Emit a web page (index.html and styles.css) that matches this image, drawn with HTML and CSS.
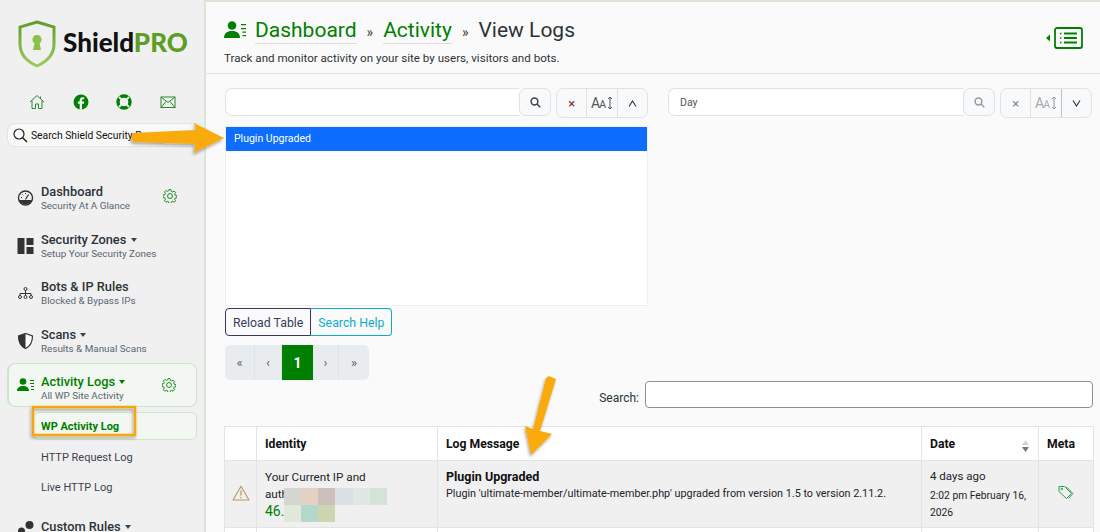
FILE: index.html
```html
<!DOCTYPE html>
<html lang="en">
<head>
<meta charset="utf-8">
<title>ShieldPRO - View Logs</title>
<link rel="stylesheet" href="styles.css">
</head>
<body>
<div class="app">
  <aside class="side">
    <div class="logo">
      <svg class="logo-mark" width="40" height="48" viewBox="0 0 38 48"><defs><linearGradient id="g" x1="0" y1="0" x2="0" y2="1"><stop offset="0" stop-color="#5f9e2e"/><stop offset="1" stop-color="#9ccb5a"/></linearGradient></defs><path d="M19 2 L36 7 V24 C36 35 28 42 19 46 C10 42 2 35 2 24 V7 Z" fill="none" stroke="url(#g)" stroke-width="3"/><path d="M19 15a4.500 4.500 0 0 1 2.600 8.200L23 30h-8l1.400-6.800A4.500 4.500 0 0 1 19 15z" fill="#8cc04a"/></svg>
      <span class="logo-text">Shield<b>PRO</b></span>
    </div>
    <div class="quick">
      <svg width="16" height="16" viewBox="0 0 16 16" fill="none" stroke="#2a8a2a" stroke-width="1"><path d="M1 8 8 1.500 15 8M3 6.500V14.500H6.500V10H9.500V14.500H13V6.500M11.500 2.500V5"/></svg>
      <svg width="16" height="16" viewBox="0 0 16 16"><circle cx="8" cy="8" r="7.500" fill="#008000"/><path d="M9 15.500V9.800h1.900l.3-2.200H9V6.300c0-.7.300-1.100 1.200-1.100h1V3.300c-.4-.1-1-.1-1.600-.1-1.800 0-2.900 1-2.900 2.900v1.500H4.900v2.200h1.800v5.700z" fill="#f0f0f1"/></svg>
      <svg width="16" height="16" viewBox="0 0 16 16"><circle cx="8" cy="8" r="6" fill="none" stroke="#008000" stroke-width="3.400"/><path d="M3 3 5.800 5.800M13 3 10.200 5.800M3 13 5.800 10.200M13 13 10.200 10.200" stroke="#f0f0f1" stroke-width="1.800"/></svg>
      <svg width="16" height="16" viewBox="0 0 16 16" fill="none" stroke="#2a8a2a" stroke-width="1"><rect x="1" y="3" width="14" height="10.500"/><path d="M1 3 8 8.500 15 3M1 13.500 6 7.500M15 13.500 10 7.500"/></svg>
    </div>
    <div class="site-search">
      <svg width="15" height="15" viewBox="0 0 15 15" fill="none" stroke="#222" stroke-width="1.200"><circle cx="6" cy="6" r="5"/><path d="M9.700 9.700 14 14" stroke-width="1.600"/></svg>
      <span>Search Shield Security P</span>
    </div>
    <nav class="nav">
      <div class="nav-item">
        <svg class="nav-ico" width="16" height="16" viewBox="0 0 16 16"><circle cx="8" cy="8" r="7" fill="none" stroke="#333" stroke-width="1.400"/><path d="M1.500 10h13a7 7 0 0 1-13 0z" fill="#333"/><path d="M8 9.500 11 4.500" stroke="#333" stroke-width="1.200"/><path d="M3.500 7.500h1M5 4.500l.7.700M8 3v1" stroke="#333"/></svg>
        <div class="nav-text"><span class="nav-title">Dashboard</span><span class="nav-sub">Security At A Glance</span></div>
        <svg class="gear" width="14" height="14" viewBox="0 0 16 16" fill="none" stroke="#008000" stroke-width="1"><circle cx="8" cy="8" r="2.800"/><path d="M6.800.800h2.400l.4 2 1.400.6 1.700-1.100 1.700 1.700-1.100 1.700.6 1.400 2 .4v2.400l-2 .4-.6 1.400 1.100 1.700-1.700 1.700-1.700-1.100-1.400.6-.4 2H6.800l-.4-2-1.400-.6-1.700 1.100-1.700-1.700 1.100-1.700-.6-1.400-2-.4V6.800l2-.4.6-1.400-1.100-1.700 1.700-1.700 1.700 1.100 1.400-.6z"/></svg>
      </div>
      <div class="nav-item">
        <svg class="nav-ico" width="16" height="16" viewBox="0 0 16 16" fill="#333"><rect x="0" y="0" width="7" height="16"/><rect x="9" y="0" width="7" height="7"/><rect x="9" y="9" width="7" height="7"/></svg>
        <div class="nav-text"><span class="nav-title">Security Zones <i class="caret"></i></span><span class="nav-sub">Setup Your Security Zones</span></div>
      </div>
      <div class="nav-item">
        <svg class="nav-ico" width="16" height="16" viewBox="0 0 16 16" fill="none" stroke="#333" stroke-width="1"><rect x="6.500" y="2.500" width="3" height="3" rx="1.500"/><circle cx="2.500" cy="12" r="1.500"/><circle cx="8" cy="12" r="1.500"/><circle cx="13.500" cy="12" r="1.500"/><path d="M8 5.500v5M2.500 10.500V8.500h11v2"/></svg>
        <div class="nav-text"><span class="nav-title">Bots &amp; IP Rules</span><span class="nav-sub">Blocked &amp; Bypass IPs</span></div>
      </div>
      <div class="nav-item">
        <svg class="nav-ico" width="16" height="16" viewBox="0 0 16 16"><path d="M8 .500 15 3c0 6-1.500 10-7 12.500C2.500 13 1 9 1 3z" fill="#fff" stroke="#333" stroke-width="1.200"/><path d="M8 .500 1 3c0 6 1.500 10 7 12.500z" fill="#333"/></svg>
        <div class="nav-text"><span class="nav-title">Scans <i class="caret"></i></span><span class="nav-sub">Results &amp; Manual Scans</span></div>
      </div>
      <div class="nav-item active">
        <svg class="nav-ico" width="17" height="14" viewBox="0 0 17 14" fill="#008000"><circle cx="6" cy="3.500" r="3.300"/><path d="M0 13c0-3.500 2.500-5 6-5s6 1.500 6 5z"/><path d="M13 2h4v1h-4zM13 5h4v1h-4zM14 8h3v1h-3zM14 11h3v1h-3z"/></svg>
        <div class="nav-text"><span class="nav-title">Activity Logs <i class="caret"></i></span><span class="nav-sub">All WP Site Activity</span></div>
        <svg class="gear" width="14" height="14" viewBox="0 0 16 16" fill="none" stroke="#008000" stroke-width="1"><circle cx="8" cy="8" r="2.800"/><path d="M6.800.800h2.400l.4 2 1.400.6 1.700-1.100 1.700 1.700-1.100 1.700.6 1.400 2 .4v2.400l-2 .4-.6 1.400 1.100 1.700-1.700 1.700-1.700-1.100-1.400.6-.4 2H6.800l-.4-2-1.400-.6-1.700 1.100-1.700-1.700 1.100-1.700-.6-1.400-2-.4V6.800l2-.4.6-1.400-1.100-1.700 1.700-1.700 1.700 1.100 1.400-.6z"/></svg>
      </div>
      <div class="subnav">
        <a class="sub-item current">WP Activity Log</a>
        <a class="sub-item">HTTP Request Log</a>
        <a class="sub-item">Live HTTP Log</a>
      </div>
      <div class="nav-item last">
        <svg class="nav-ico" width="16" height="16" viewBox="0 0 16 16" fill="#333"><circle cx="4" cy="12" r="3.500"/><circle cx="12" cy="6" r="4"/></svg>
        <div class="nav-text"><span class="nav-title">Custom Rules <i class="caret"></i></span></div>
      </div>
    </nav>
  </aside>

  <main class="main">
    <header class="head">
      <div>
        <h1 class="title">
          <svg width="22" height="18" viewBox="0 0 22 18" fill="#008000"><circle cx="8" cy="4.500" r="4.300"/><path d="M0 17c0-4.500 3-7 8-7s8 2.500 8 7z"/><path d="M17 3h5v1.300h-5zM17 7h5v1.300h-5zM18.500 10.500H22v1.300h-3.500zM18.500 14H22v1.300h-3.500z"/></svg>
          <a>Dashboard</a><span class="sep">»</span><a>Activity</a><span class="sep">»</span><span>View Logs</span>
        </h1>
        <p class="lead">Track and monitor activity on your site by users, visitors and bots.</p>
      </div>
      <svg class="toc" width="37" height="22" viewBox="0 0 37 22"><path d="M4 4 0 7.500 4 11z" fill="#008000" transform="translate(0 3.500)"/><rect x="9" y="1" width="27" height="20" rx="2" fill="none" stroke="#008000" stroke-width="1.800"/><path d="M18 6.500h13M18 11h13M18 15.500h13" stroke="#008000" stroke-width="1.800"/><path d="M14 6.500h1.500M14 11h1.500M14 15.500h1.500" stroke="#008000" stroke-width="1.500"/></svg>
    </header>

    <section class="panes">
      <div class="pane">
        <div class="controls">
          <div class="input-group"><div class="input"></div><button class="search-btn"><svg width="11" height="11" viewBox="0 0 11 11" fill="none" stroke="#444" stroke-width="1.500"><circle cx="4.500" cy="4.500" r="3.400"/><path d="M7 7l3.300 3.300"/></svg></button></div>
          <div class="btns">
            <span class="b x">×</span>
            <span class="b aa">A<small>A</small><svg width="6" height="14" viewBox="0 0 6 14" fill="none" stroke="#555"><path d="M3 1v12M1 3l2-2 2 2M1 11l2 2 2-2"/></svg></span>
            <span class="b chev"><svg width="9" height="7" viewBox="0 0 9 7" fill="none" stroke="#333" stroke-width="1.100"><path d="M1 6.500 4.500 1 8 6.500"/></svg></span>
          </div>
        </div>
        <div class="listbox"><div class="option">Plugin Upgraded</div></div>
      </div>
      <div class="pane right">
        <div class="controls">
          <div class="input-group"><div class="input day">Day</div><button class="search-btn"><svg width="11" height="11" viewBox="0 0 11 11" fill="none" stroke="#999" stroke-width="1.500"><circle cx="4.500" cy="4.500" r="3.400"/><path d="M7 7l3.300 3.300"/></svg></button></div>
          <div class="btns dim">
            <span class="b x">×</span>
            <span class="b aa">A<small>A</small><svg width="6" height="14" viewBox="0 0 6 14" fill="none" stroke="#999"><path d="M3 1v12M1 3l2-2 2 2M1 11l2 2 2-2"/></svg></span>
            <span class="b chev on"><svg width="9" height="7" viewBox="0 0 9 7" fill="none" stroke="#333" stroke-width="1.100"><path d="M1 .500 4.500 6 8 .500"/></svg></span>
          </div>
        </div>
      </div>
    </section>

    <div class="actions"><a class="reload">Reload Table</a><a class="help">Search Help</a></div>

    <div class="pager-row">
      <div class="pager"><span>«</span><span>‹</span><span class="now">1</span><span>›</span><span>»</span></div>
      <label class="dt-search">Search:<span class="dt-input"></span></label>
    </div>

    <table class="logs">
      <colgroup><col class="c1"><col class="c2"><col class="c3"><col class="c4"><col class="c5"></colgroup>
      <thead>
        <tr><th></th><th>Identity</th><th>Log Message</th><th class="sortable">Date<svg class="sort" width="9" height="14" viewBox="0 0 9 14"><path d="M4.500 1 8 6H1z" fill="#d4d4d6"/><path d="M4.500 13 8 8H1z" fill="#77777b"/></svg></th><th>Meta</th></tr>
      </thead>
      <tbody>
        <tr class="row">
          <td class="sev"><svg width="18" height="16" viewBox="0 0 18 16" fill="none" stroke="#b9985a" stroke-width="1.100"><path d="M9 1.200 17 15H1z" stroke-linejoin="round"/><path d="M9 5.500V10.500M9 12v1.200" stroke-width="1.300"/></svg></td>
          <td class="who">Your Current IP and<br>auth<br><a class="ip">46.</a></td>
          <td class="msg"><strong>Plugin Upgraded</strong><span>Plugin 'ultimate-member/ultimate-member.php' upgraded from version 1.5 to version 2.11.2.</span></td>
          <td class="when"><span class="ago">4 days ago</span><span class="stamp">2:02 pm February 16, 2026</span></td>
          <td class="meta"><svg width="16" height="15" viewBox="0 0 16 15" fill="none" stroke="#2e9e4a" stroke-width="1"><path d="M1 1.500h5.500l7 7-5 5-7.500-7z"/><path d="M8 1.500l7 7-4.500 5"/><circle cx="3.800" cy="4" r=".8"/></svg></td>
        </tr>
        <tr class="next"><td></td><td></td><td></td><td></td><td></td></tr>
      </tbody>
    </table>
  </main>
</div>

<div class="overlay pixels" aria-hidden="true">
  <i class="p1"></i><i class="p2"></i><i class="p3"></i><i class="p4"></i><i class="p5"></i><i class="p6"></i>
  <i class="p7"></i><i class="p8"></i><i class="p9"></i>
</div>
<svg class="overlay arrows" width="1100" height="532" viewBox="0 0 1100 532" aria-hidden="true">
  <defs><filter id="s" x="-20%" y="-20%" width="140%" height="140%"><feDropShadow dx="-1" dy="2" stdDeviation="1.500" flood-color="#000" flood-opacity=".35"/></filter></defs>
  <g fill="#f9ab0b" filter="url(#s)">
    <path d="M133 133 196 130 194 123 224 138 194 153 195 144 133 142Q130 138 133 133Z"/>
    <path d="M549 376 556 379 540 431 552 434 531 455 525 426 533 429 546 378Z"/>
  </g>
  <rect x="33" y="407" width="102" height="28" fill="none" stroke="#f5a70f" stroke-width="2.500" filter="url(#s)"/>
</svg>
</body>
</html>
```

FILE: styles.css
```css
* { box-sizing: border-box; }
html, body { margin: 0; height: 532px; overflow: hidden; }
body { font-family: Roboto, "Noto Sans", "Liberation Sans", sans-serif; color: #1d2327; background: #fafafa; position: relative; }
.app { display: flex; height: 532px; overflow: hidden; }

/* sidebar */
.side { width: 206px; flex: none; background: #f0f0f1; border-right: 2px solid #dbe5d8; padding: 20px 7px 0; }
.logo { display: flex; align-items: center; gap: 6px; height: 48px; padding-left: 10px; }
.logo-text { font: 900 26px/1 Lato, "Noto Sans", sans-serif; color: #111; margin-top: -4px; }
.logo-text b { color: #5d9e24; font-weight: 900; }
.quick { display: flex; justify-content: space-between; padding: 0 21px 0 22px; margin-top: 26px; height: 16px; }
.site-search { margin-top: 13px; height: 24px; margin-right: -8px; display: flex; align-items: center; gap: 3px; padding-left: 5px; border: 1px solid #dfe8dc; border-radius: 8px; background: #f8f9f8; font-size: 10.300px; color: #111; white-space: nowrap; overflow: hidden; }
.site-search span { margin-top: 1px; }
.nav { margin-top: 27.500px; display: flex; flex-direction: column; }
.nav-item { position: relative; display: flex; align-items: center; height: 47.500px; padding-left: 10px; gap: 7px; }
.nav-ico { flex: none; width: 17px; }
.nav-text { display: flex; flex-direction: column; }
.nav-title { font-size: 12.800px; line-height: 15px; font-weight: 500; color: #2c3338; white-space: nowrap; }
.nav-sub { font-size: 9.900px; line-height: 13px; color: #5a6670; white-space: nowrap; }
.caret { display: inline-block; border: 3px solid transparent; border-top: 4px solid #3c434a; border-bottom: 0; margin-left: 1px; vertical-align: 2px; }
.gear { position: absolute; right: 20px; top: 50%; margin-top: -9px; }
.nav-item.active { height: 44px; margin-top: -1.500px; background: #f2f7f1; border: 1px solid #cfe4cc; border-left-width: 2px; border-radius: 8px; padding-left: 8px; }
.active .nav-text { margin-top: 6px; }
.active .nav-title { color: #008000; }
.active .caret { border-top-color: #008000; }
.active .gear { margin-top: -7px; }
.nav-item.last { align-items: flex-start; padding-top: 9px; }
.subnav { display: flex; flex-direction: column; padding-left: 26px; margin-top: 5px; }
.sub-item { height: 30px; line-height: 32px; padding-left: 8px; font-size: 11px; color: #3c434a; }
.sub-item.current { height: 28px; line-height: 27px; margin-bottom: 2px; font-weight: 700; color: #008000; background: #f2f7f1; border: 1px solid #cfe4cc; border-radius: 6px; padding-left: 7px; }
.subnav .sub-item:last-child { margin-bottom: 8px; }

/* main */
.main { flex: 1; min-width: 0; padding: 0 7px 0 19px; border-top: 2px solid #dbe5d8; }
.head { display: flex; justify-content: space-between; align-items: flex-start; height: 72px; margin: 0 -7px 0 -19px; padding: 11px 17px 0 18px; border-bottom: 1px solid #e2e2e3; }
.title { margin: 0; font-size: 21px; line-height: 30px; font-weight: 400; display: flex; align-items: center; color: #2c3338; }
.title svg { margin-right: 9px; }
.title a { color: #008000; border-bottom: 1px solid #dcdcde; line-height: 26px; }
.sep { font-size: 14px; margin: 4px 10px 0 10px; color: #444; }
.lead { margin: 3px 0 0; font-size: 11.600px; line-height: 16px; color: #2c3338; }
.toc { margin: 14px 0 0 0; }

.panes { display: flex; gap: 20px; margin-top: 14px; }
.pane { width: 423px; }
.pane.right { width: 424px; }
.controls { display: flex; gap: 5px; align-items: flex-start; height: 29px; }
.input-group { flex: 1; display: flex; height: 28px; }
.input { flex: 1; background: #fff; border: 1px solid #dee2e6; border-right: 0; border-radius: 7px 0 0 7px; font-size: 10.500px; line-height: 27px; color: #555; padding-left: 11px; }
.search-btn { width: 32px; padding: 0; background: #f8f9fa; border: 1px solid #dee2e6; border-radius: 7px; display: flex; align-items: center; justify-content: center; }
.btns { display: flex; height: 30px; width: 92px; background: #f8f9fa; border: 1px solid #dee2e6; border-radius: 7px; }
.b { flex: 1; display: flex; align-items: center; justify-content: center; border-left: 1px solid #dee2e6; color: #8a2a2a; font-size: 13px; }
.b:first-child { border-left: 0; }
.b.aa { font-size: 14px; color: #555; gap: 0; }
.b.aa small { font-size: 10.500px; margin: 2px 1px 0 -1px; }
.dim .b.x { color: #888; }
.dim .b.aa { color: #aaa; }
.b.on { border-left-color: #bcc2c8; }
.listbox { margin-top: 9px; height: 180px; background: #fff; border: 1px solid #eeeeef; }
.option { background: #0d6efd; color: #fff; height: 24px; line-height: 24px; font-size: 10.500px; padding-left: 8px; }

.actions { display: flex; margin-top: 2px; height: 28px; }
.actions a { font-size: 12.300px; line-height: 28px; padding: 0 7px; border: 1px solid; }
.reload { color: #373a5c; border-color: #373a5c !important; border-radius: 4px 0 0 4px; }
.help { color: #0dabc9; border-color: #0dabc9 !important; border-left: 0 !important; border-radius: 0 4px 4px 0; }

.pager-row { position: relative; margin-top: 9px; height: 81px; }
.pager { display: inline-flex; height: 35px; background: #e9ecef; border-radius: 5px; overflow: hidden; }
.pager span { width: 27px; display: flex; align-items: center; justify-content: center; color: #5c636a; font-size: 13px; border-right: 1px solid #dee2e6; }
.pager span:first-child, .pager span:last-child { width: 30px; }
.pager span:nth-child(4) { width: 26px; }
.pager span:last-child { border-right: 0; }
.pager .now { width: 31px; background: #008000; color: #fff; font-weight: 700; font-size: 14px; border: 0; }
.dt-search { position: absolute; right: 0; top: 36px; display: flex; align-items: flex-end; gap: 6px; font-size: 12px; line-height: 20px; color: #2c3338; }
.dt-input { display: block; width: 448px; height: 27px; background: #fff; border: 1px solid #8c8f94; border-radius: 4px; }

.logs { width: 869px; margin-left: -1px; table-layout: fixed; border-collapse: collapse; font-size: 12px; background: #fff; }
.c1 { width: 32px; } .c2 { width: 181px; } .c3 { width: 484px; } .c4 { width: 117px; } .c5 { width: 55px; }
.logs th, .logs td { border: 1px solid #e2e4e8; padding: 0 8px; text-align: left; }
.logs th { height: 34px; font-size: 12.200px; color: #111; font-weight: 700; }
.sortable { position: relative; }
.sort { position: absolute; right: 8px; top: 12px; }
.row td { height: 67px; background: #f0f0f1; vertical-align: top; padding-top: 7px; }
.next td { height: 40px; background: #fff; }
.logs .sev { padding: 0; text-align: center; vertical-align: middle; }
.logs .who { line-height: 17px; font-size: 11.700px; padding-top: 8px; }
.ip { color: #008000; font-size: 14px; }
.msg strong { display: block; font-size: 12.500px; line-height: 17px; color: #111; }
.msg span { display: block; font-size: 10.800px; line-height: 18px; white-space: nowrap; }
.ago { display: block; font-size: 11.500px; line-height: 17px; }
.stamp { display: block; font-size: 10.300px; line-height: 17px; margin-top: 2px; }
.logs .meta { padding: 0; text-align: center; vertical-align: middle; }

/* overlays */
.overlay { position: absolute; left: 0; top: 0; }
.arrows { pointer-events: none; }
.pixels { left: 284px; top: 488px; width: 103px; display: grid; grid-template-columns: repeat(6, 17.170px); grid-auto-rows: 17px; }
.p1 { background: #d5d6d2; } .p2 { background: #e4d3c4; } .p3 { background: #cdc0ba; }
.p4 { background: #dde0e2; } .p5 { background: #dfe8e2; } .p6 { background: #d3e3da; }
.p7 { background: #e2e8da; } .p8 { background: #b3d7cb; } .p9 { background: #ccd6b0; }
```
